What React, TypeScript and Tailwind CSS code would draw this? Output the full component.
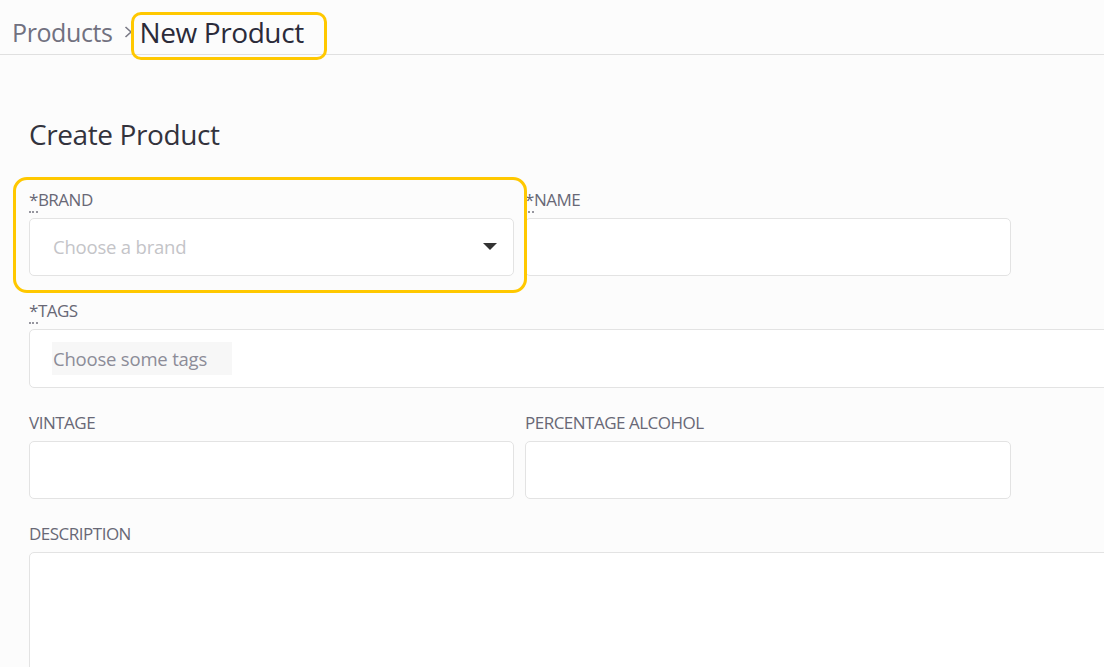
import { useState } from 'react'

const font = { fontFamily: '"Open Sans", "Noto Sans", sans-serif' }

function Req() {
  return (
    <abbr title="required" className="no-underline border-b-2 border-dotted border-[#6b6b78]/70">
      *
    </abbr>
  )
}

function Label({ children, required }: { children: React.ReactNode; required?: boolean }) {
  return (
    <label className="block h-[18px] mb-[9px] text-[17px] leading-[18px] tracking-[-0.5px] text-[#686876] uppercase">
      {required && <Req />}
      {children}
    </label>
  )
}

const boxClass = 'h-[58px] w-full rounded-[5px] border border-[#e3e3e3] bg-white'

export default function App() {
  const [brand] = useState('')

  return (
    <div className="h-[667px] w-[1104px] overflow-hidden bg-[#fcfcfc]" style={font}>
      {/* Breadcrumb header */}
      <div className="relative flex h-[55px] items-center border-b border-[#e0e0e0] pl-[12px] pt-[10px]">
        <span className="text-[25px] leading-[30px] text-[#717180] tracking-[-0.4px]">Products</span>
        <svg className="ml-[11px]" width="9" height="12" viewBox="0 0 9 12">
          <path d="M1.5 1 L7 6 L1.5 11" fill="none" stroke="#7a7a86" strokeWidth="1.6" />
        </svg>
        <span className="ml-[7px] text-[28px] leading-[30px] text-[#2b2b3a] tracking-[-0.4px]">New Product</span>
        <div className="pointer-events-none absolute left-[131px] top-[12px] h-[48px] w-[196px] rounded-[10px] border-[3px] border-[#ffc800]" />
      </div>

      <div className="px-[29px] pt-[62px]">
        <h1 className="mb-[40px] text-[28px] leading-[34px] text-[#33333d] tracking-[-0.4px]">Create Product</h1>

        <div className="grid w-[1478px] grid-cols-[485px_486px_485px] gap-x-[11px] gap-y-[26px]">
          {/* Brand */}
          <div className="relative">
            <Label required>Brand</Label>
            <div className={`${boxClass} flex items-center justify-between pl-[23px] pr-[16px]`}>
              <span className="text-[18.5px] tracking-[-0.2px] text-[#c4c4c8]">{brand || 'Choose a brand'}</span>
              <svg width="14" height="8" viewBox="0 0 14 8">
                <path d="M0 0 L14 0 L7 7 Z" fill="#333" />
              </svg>
            </div>
            <div className="pointer-events-none absolute left-[-16px] top-[-14px] h-[116px] w-[514px] rounded-[14px] border-[3px] border-[#ffc800]" />
          </div>

          {/* Name */}
          <div className="col-span-2 w-[486px]">
            <Label required>Name</Label>
            <div className={boxClass} />
          </div>

          {/* Tags */}
          <div className="col-span-3">
            <Label required>Tags</Label>
            <div className={`${boxClass} h-[59px] flex items-center pl-[22px]`}>
              <span className="flex h-[33px] items-center bg-[#f7f7f7] pl-[1px] pr-[25px] text-[18.5px] tracking-[-0.2px] text-[#8c8c98]">
                Choose some tags
              </span>
            </div>
          </div>

          {/* Vintage */}
          <div>
            <Label>Vintage</Label>
            <div className={boxClass} />
          </div>

          {/* Percentage alcohol */}
          <div className="col-span-2 w-[486px]">
            <Label>Percentage Alcohol</Label>
            <div className={boxClass} />
          </div>

          {/* Description */}
          <div className="col-span-3">
            <Label>Description</Label>
            <div className={`${boxClass} h-[160px]`} />
          </div>
        </div>
      </div>
    </div>
  )
}
